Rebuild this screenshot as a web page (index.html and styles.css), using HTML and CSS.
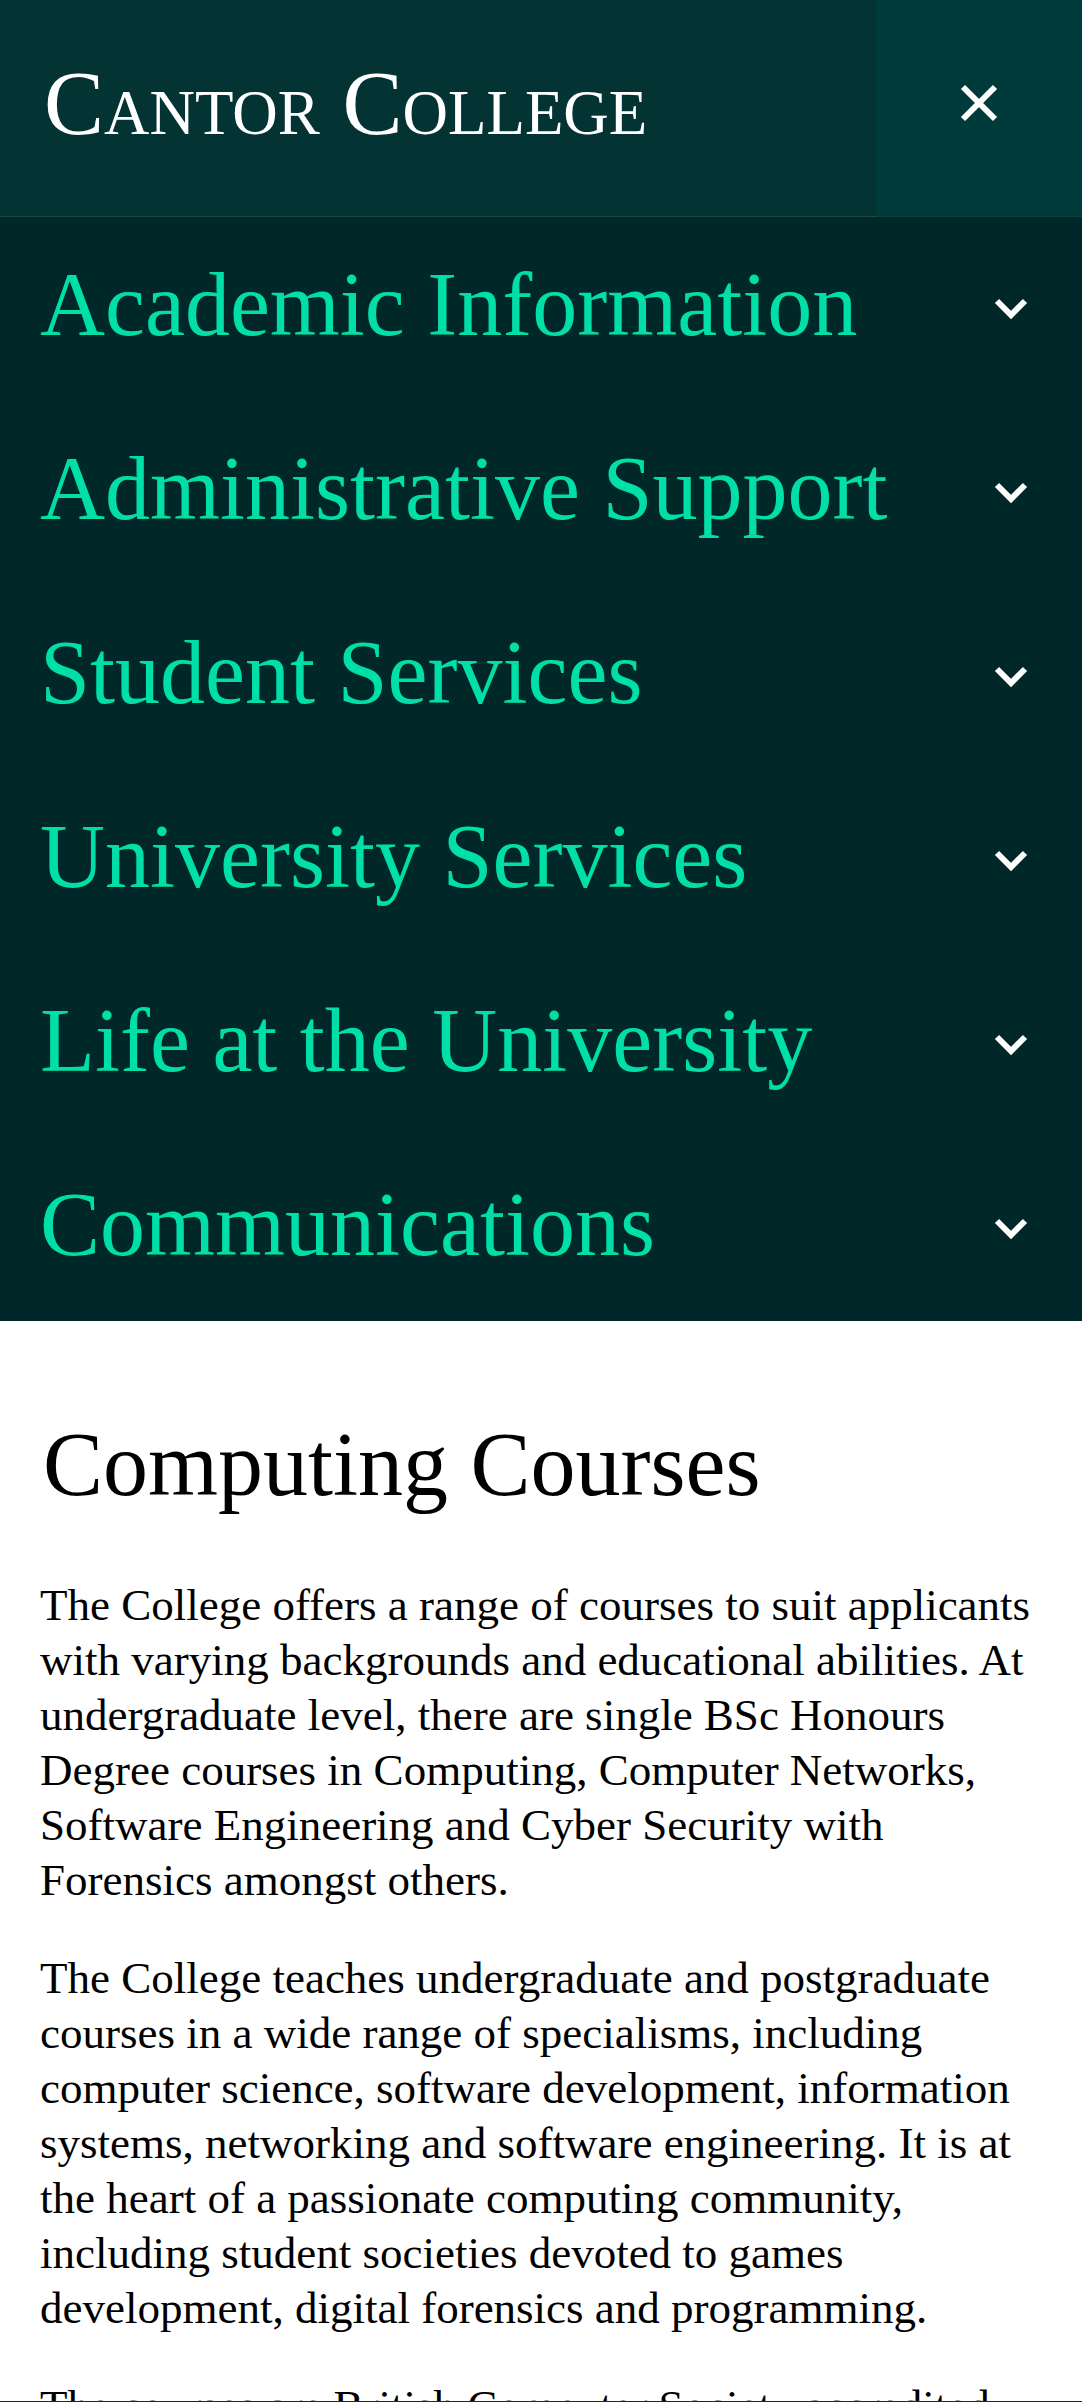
FILE: index.html
```html
<!DOCTYPE html>
<html lang="en">
<head>
<meta charset="utf-8">
<meta name="viewport" content="width=device-width, initial-scale=1">
<title>Cantor College</title>
<link rel="stylesheet" href="styles.css">
</head>
<body>
<header class="header">
  <a class="brand" href="#">Cantor College</a>
  <button class="toggle" type="button" aria-label="Close menu" aria-expanded="true">
    <svg class="toggle-icon" viewBox="0 0 40 40" aria-hidden="true"><path d="M4 4 36 36M36 4 4 36"/></svg>
  </button>
</header>
<nav class="menu" aria-label="Main">
  <a class="menu-link" href="#">Academic Information<svg class="chevron" viewBox="0 0 32 20" aria-hidden="true"><path d="M2 2 16 16 30 2"/></svg></a>
  <a class="menu-link" href="#">Administrative Support<svg class="chevron" viewBox="0 0 32 20" aria-hidden="true"><path d="M2 2 16 16 30 2"/></svg></a>
  <a class="menu-link" href="#">Student Services<svg class="chevron" viewBox="0 0 32 20" aria-hidden="true"><path d="M2 2 16 16 30 2"/></svg></a>
  <a class="menu-link" href="#">University Services<svg class="chevron" viewBox="0 0 32 20" aria-hidden="true"><path d="M2 2 16 16 30 2"/></svg></a>
  <a class="menu-link" href="#">Life at the University<svg class="chevron" viewBox="0 0 32 20" aria-hidden="true"><path d="M2 2 16 16 30 2"/></svg></a>
  <a class="menu-link" href="#">Communications<svg class="chevron" viewBox="0 0 32 20" aria-hidden="true"><path d="M2 2 16 16 30 2"/></svg></a>
</nav>
<main class="content">
  <h1 class="title">Computing Courses</h1>
  <p class="text">The College offers a range of courses to suit applicants with varying backgrounds and educational abilities. At undergraduate level, there are single BSc Honours Degree courses in Computing, Computer Networks, Software Engineering and Cyber Security with Forensics amongst others.</p>
  <p class="text">The College teaches undergraduate and postgraduate courses in a wide range of specialisms, including computer science, software development, information systems, networking and software engineering. It is at the heart of a passionate computing community, including student societies devoted to games development, digital forensics and programming.</p>
  <p class="text">The courses are British Computer Society accredited</p>
</main>
</body>
</html>
```

FILE: styles.css
```css
* {
  box-sizing: border-box;
}

body {
  margin: 0;
  height: 100vh;
  display: flex;
  flex-direction: column;
  overflow: hidden;
  background: #fff;
  color: #000;
  font-family: "Liberation Serif", "Times New Roman", serif;
}

.header {
  flex: none;
  display: flex;
  background: #033333;
}

.brand {
  flex: 1;
  padding: 52px 40px 60px 44px;
  border-bottom: 1px solid #1f4747;
  color: #fff;
  font-size: 90px;
  line-height: 104px;
  font-variant: small-caps;
  text-decoration: none;
}

.toggle {
  width: 19%;
  padding: 0 0 8px;
  border: 0;
  border-bottom: 1px solid #0a4040;
  background: #003b3b;
}

.toggle-icon {
  width: 40px;
  height: 40px;
  fill: none;
  stroke: #fff;
  stroke-width: 6;
}

.menu {
  flex: none;
  background: #002828;
}

.menu-link {
  display: flex;
  align-items: center;
  justify-content: space-between;
  padding: 36px 55px 44px 40px;
  color: #00dfa8;
  font-size: 90px;
  line-height: 104px;
  text-decoration: none;
}

.chevron {
  flex: none;
  width: 32px;
  height: 20px;
  margin-top: 8px;
  overflow: visible;
  fill: none;
  stroke: #fff;
  stroke-width: 6;
}

.content {
  flex: 1;
  min-height: 0;
  overflow: hidden;
  padding: 92px 40px 0;
  border-bottom: 1px solid #033333;
}

.title {
  margin: 0 0 61px;
  padding-left: 3px;
  font-size: 90px;
  font-weight: 400;
  line-height: 104px;
}

.text {
  margin: 0 0 43px;
  font-size: 45px;
  line-height: 55px;
}
```
